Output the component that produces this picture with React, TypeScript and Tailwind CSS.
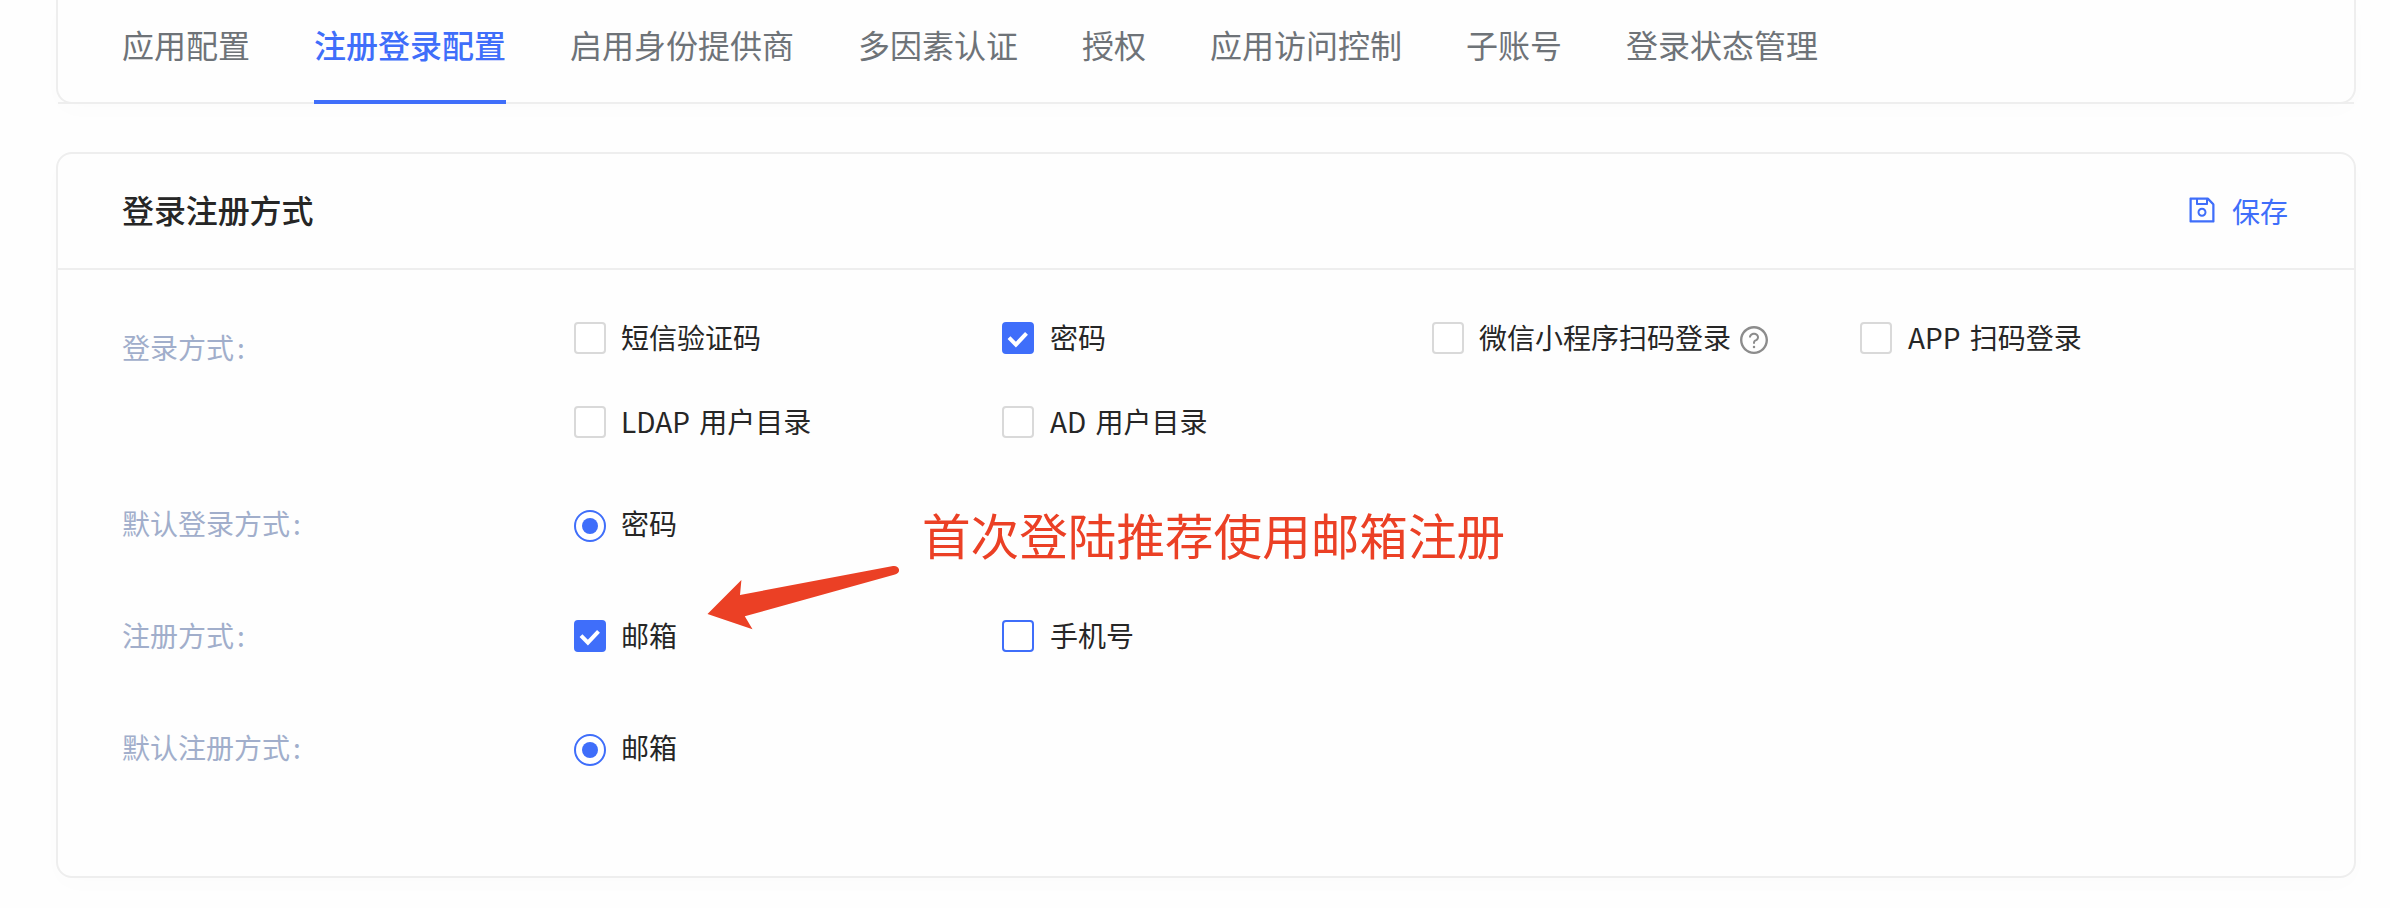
import type { ReactNode } from "react";
import { AiOutlineQuestionCircle, AiOutlineSave } from "react-icons/ai";

const TABS = [
  "应用配置",
  "注册登录配置",
  "启用身份提供商",
  "多因素认证",
  "授权",
  "应用访问控制",
  "子账号",
  "登录状态管理",
];

type BoxState = "off" | "on" | "focus";

function Checkbox({
  state = "off",
  gap = "pl-[15px]",
  children,
}: {
  state?: BoxState;
  gap?: string;
  children: ReactNode;
}) {
  const tone =
    state === "on"
      ? "border-[#3f6efa] bg-[#3f6efa]"
      : state === "focus"
        ? "border-[#3f6efa] bg-white"
        : "border-[#d9d9d9] bg-white";
  return (
    <label className="flex h-8 items-center">
      <span className={`flex size-8 shrink-0 items-center justify-center rounded-[4px] border-2 ${tone}`}>
        {state === "on" && (
          <svg viewBox="0 0 28 28" className="size-7 shrink-0" fill="none">
            <path d="M5 13.6 L11.9 20.6 L22.5 9.4" stroke="#fff" strokeWidth="4" />
          </svg>
        )}
      </span>
      <span className={`-mt-0.5 flex items-center leading-8 whitespace-nowrap [word-spacing:3px] ${gap}`}>
        {children}
      </span>
    </label>
  );
}

function Radio({ children }: { children: ReactNode }) {
  return (
    <label className="flex h-8 items-center">
      <span className="flex size-8 shrink-0 items-center justify-center rounded-full border-2 border-[#3f6efa] bg-white">
        <span className="size-4 rounded-full bg-[#3f6efa]" />
      </span>
      <span className="-mt-1.5 pl-[15px] leading-8">{children}</span>
    </label>
  );
}

function Row({
  label,
  className,
  labelClass = "",
  children,
}: {
  label: string;
  className: string;
  labelClass?: string;
  children: ReactNode;
}) {
  return (
    <div className={`flex ${className}`}>
      <div className={`w-[452px] shrink-0 leading-8 text-[#a1aecb] ${labelClass}`}>
        {label}
        <span className="ml-[3px]">:</span>
      </div>
      <div className="grid grid-cols-[428px_430px_428px_428px] content-start gap-y-[52px]">{children}</div>
    </div>
  );
}

export default function App() {
  return (
    <div className="relative h-[908px] w-[2390px] overflow-hidden bg-[#fefefe] pl-14 font-['Noto_Sans_CJK_SC',sans-serif] text-[28px] text-[#262626]">
      <nav className="h-[104px] w-[2300px] rounded-b-2xl border-x-2 border-b-2 border-[#eeeeee] bg-[#fefefe] shadow-[0_8px_24px_rgba(0,20,20,0.01)]">
        <div className="flex h-[104px] gap-16 border-b-2 border-[#eeeeee] px-16 text-[32px] text-[#6e7378]">
          {TABS.map((tab, i) => (
            <div
              key={tab}
              className={
                i === 1
                  ? "h-[104px] border-b-4 border-[#3f6efa] pt-[24px] leading-[40px] font-medium text-[#3f6efa]"
                  : "h-[104px] pt-[24px] leading-[40px]"
              }
            >
              {tab}
            </div>
          ))}
        </div>
      </nav>

      <section className="mt-12 h-[726px] w-[2300px] rounded-2xl border-2 border-[#eeeeee] bg-[#fefefe] shadow-[0_8px_24px_rgba(0,20,20,0.01)]">
        <header className="flex h-[116px] items-center justify-between border-b-2 border-[#eeeeee] pr-[66px] pl-16">
          <h2 className="-mt-[5px] text-[32px] leading-10 font-medium tracking-[-0.1px]">登录注册方式</h2>
          <button className="-mt-0.5 flex items-center text-[#3f6efa]">
            <AiOutlineSave className="size-8" />
            <span className="pt-px pl-[14px] leading-8">保存</span>
          </button>
        </header>
        <div className="flex flex-col pt-[52px] pl-16">
          <Row label="登录方式" className="h-[188px]" labelClass="pt-[9px]">
            <Checkbox>短信验证码</Checkbox>
            <Checkbox state="on" gap="pl-4">密码</Checkbox>
            <Checkbox>
              微信小程序扫码登录
              <AiOutlineQuestionCircle className="mt-[5px] ml-[7px] size-8 text-[#8c8c8c]" />
            </Checkbox>
            <Checkbox gap="pl-4">APP 扫码登录</Checkbox>
            <Checkbox>LDAP 用户目录</Checkbox>
            <Checkbox gap="pl-4">AD 用户目录</Checkbox>
          </Row>
          <Row label="默认登录方式" className="h-[110px]" labelClass="-mt-[3px]">
            <Radio>密码</Radio>
          </Row>
          <Row label="注册方式" className="h-[114px]" labelClass="-mt-px">
            <Checkbox state="on">邮箱</Checkbox>
            <Checkbox state="focus" gap="pl-4">手机号</Checkbox>
          </Row>
          <Row label="默认注册方式" className="h-8" labelClass="-mt-[3px]">
            <Radio>邮箱</Radio>
          </Row>
        </div>
      </section>

      <div className="absolute top-[502px] left-[922px] text-[48.6px] leading-[64px] whitespace-nowrap text-[#eb4025]">
        首次登陆推荐使用邮箱注册
      </div>
      <svg className="absolute top-[560px] left-[700px] h-[76px] w-[206px]" viewBox="700 560 206 76">
        <path
          d="M707.5 614 L741.4 580 L740 595 L893 566 Q898 565.5 899 569.5 Q899.5 573 895 574.6 L744.8 616.3 L752.5 629.3 Z"
          fill="#eb4025"
        />
      </svg>
    </div>
  );
}
